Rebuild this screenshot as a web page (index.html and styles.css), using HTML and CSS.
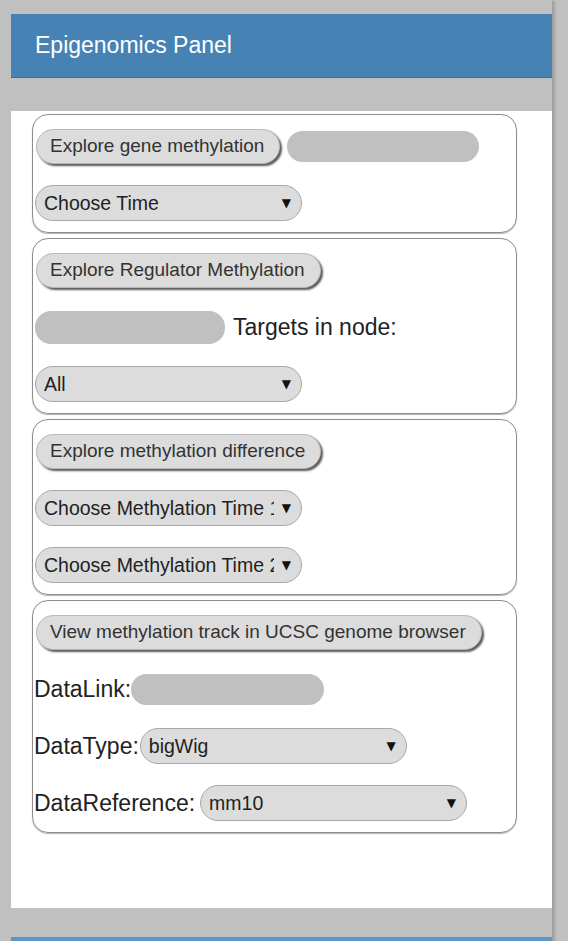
FILE: index.html
```html
<!DOCTYPE html>
<html lang="en">
<head>
<meta charset="utf-8">
<title>Epigenomics Panel</title>
<link rel="stylesheet" href="styles.css">
</head>
<body>
<div class="page">
  <div class="panel-header">Epigenomics Panel</div>
  <div class="band"></div>
  <div class="panel-body">
    <section class="card">
      <div class="row">
        <button class="btn">Explore gene methylation</button>
        <span class="pill pill-gene"></span>
      </div>
      <div class="row">
        <span class="sel"><select><option>Choose Time</option></select></span>
      </div>
    </section>
    <section class="card">
      <div class="row">
        <button class="btn">Explore Regulator Methylation</button>
      </div>
      <div class="row">
        <span class="pill pill-node"></span>
        <span class="lbl lbl-targets">Targets in node:</span>
      </div>
      <div class="row">
        <span class="sel"><select><option>All</option></select></span>
      </div>
    </section>
    <section class="card">
      <div class="row">
        <button class="btn">Explore methylation difference</button>
      </div>
      <div class="row">
        <span class="sel"><select><option>Choose Methylation Time 1</option></select></span>
      </div>
      <div class="row">
        <span class="sel"><select><option>Choose Methylation Time 2</option></select></span>
      </div>
    </section>
    <section class="card">
      <div class="row">
        <button class="btn">View methylation track in UCSC genome browser</button>
      </div>
      <div class="row">
        <span class="lbl">DataLink:</span>
        <span class="pill pill-link"></span>
      </div>
      <div class="row">
        <span class="lbl">DataType:</span>
        <span class="sel sel-type"><select><option>bigWig</option></select></span>
      </div>
      <div class="row">
        <span class="lbl">DataReference:</span>
        <span class="sel sel-ref"><select><option>mm10</option></select></span>
      </div>
    </section>
  </div>
  <div class="band band-bottom"></div>
  <div class="panel-header next-header"></div>
</div>
</body>
</html>
```

FILE: styles.css
```css
html, body {
  margin: 0;
  height: 100%;
  overflow: hidden;
  background: #c0c0c0;
  font-family: "Liberation Sans", Arial, sans-serif;
}

.page {
  width: 541px;
  margin-left: 11px;
  min-height: 100%;
  padding-top: 14px;
  box-sizing: border-box;
  box-shadow: 4px 0 2px -1px rgba(0, 0, 0, 0.16);
}

.panel-header {
  height: 63px;
  background: #4682b4;
  border-bottom: 1px solid #3a6c96;
  color: #ffffff;
  font-size: 23px;
  padding-left: 24px;
  display: flex;
  align-items: center;
}

.band {
  height: 33px;
}

.band-bottom {
  height: 29px;
}

.next-header {
  height: 40px;
  background: #5a96cc;
  border-bottom: none;
}

.panel-body {
  background: #ffffff;
  height: 797px;
  padding: 3px 0 0 21px;
  box-sizing: border-box;
}

.card {
  width: 485px;
  box-sizing: border-box;
  border: 1px solid #8c8c8c;
  border-radius: 16px;
  box-shadow: 0 1px 1px rgba(0, 0, 0, 0.3);
  padding: 13px 0 11px 1px;
  display: flex;
  flex-direction: column;
  gap: 21px;
  align-items: flex-start;
}

.card + .card {
  margin-top: 5px;
}

.row {
  height: 36px;
  display: flex;
  align-items: center;
}

.btn {
  font-family: "Liberation Sans", Arial, sans-serif;
  font-size: 19px;
  color: #333333;
  background: #dcdcdc;
  border: 1px solid #b8b8b8;
  border-radius: 18px;
  height: 35px;
  padding: 0 15px 0 13px;
  margin: 0 0 0 2px;
  box-shadow: 2px 2px 2px #5a5a5a;
  cursor: pointer;
}

.pill {
  display: inline-block;
  background: #c0c0c0;
  border-radius: 16px;
  height: 31px;
}

.pill-gene {
  width: 192px;
  margin-left: 7px;
}

.pill-node {
  width: 190px;
  height: 33px;
  margin-left: 1px;
}

.pill-link {
  width: 193px;
  margin-left: 0;
}

.lbl {
  font-size: 23px;
  color: #222222;
}

.lbl-targets {
  margin-left: 8px;
}

.sel {
  position: relative;
  display: inline-block;
  margin-left: 1px;
}

.sel select {
  -webkit-appearance: none;
  appearance: none;
  font-family: "Liberation Sans", Arial, sans-serif;
  font-size: 19.5px;
  color: #222222;
  background: #dcdcdc;
  border: 1px solid #a8a8a8;
  border-radius: 18px;
  height: 36px;
  width: 267px;
  padding: 0 27px 0 8px;
  margin: 0;
}

.sel::after {
  content: "\25BC";
  position: absolute;
  right: 11px;
  top: 50%;
  transform: translateY(-50%);
  font-family: "DejaVu Sans", sans-serif;
  font-size: 12px;
  color: #111111;
  pointer-events: none;
}

.sel-type {
  margin-left: 1px;
}

.sel-ref {
  margin-left: 5px;
}
```
